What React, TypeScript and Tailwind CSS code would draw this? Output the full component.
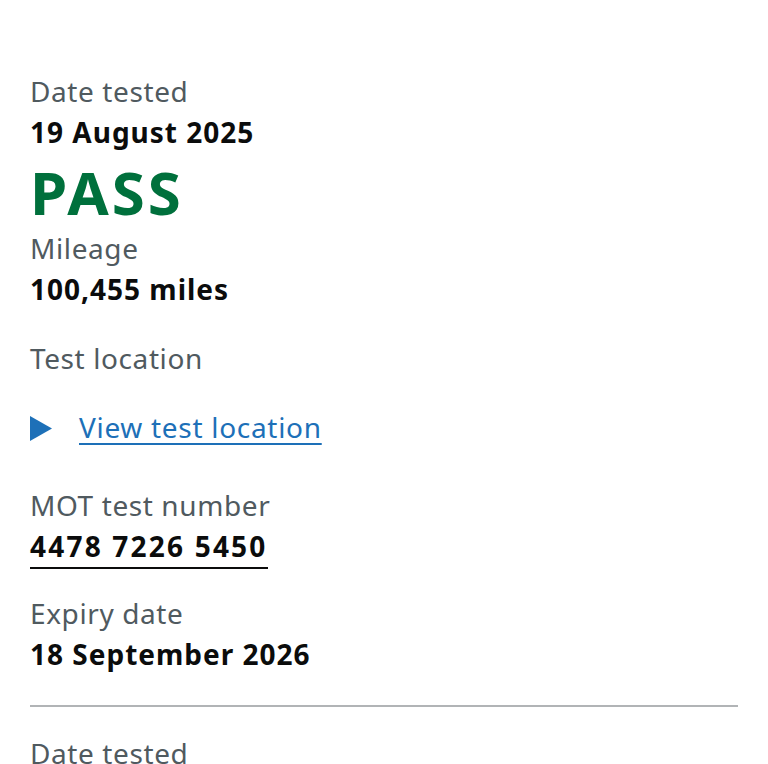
const font = { fontFamily: '"Noto Sans", "Open Sans", Arial, sans-serif' };

interface Row {
    label: string;
    value: string;
}

const Label = ({ children }: { children: React.ReactNode }) => (
    <p className="text-[28px] leading-[41px] tracking-[0.6px] text-[#505a5f]">{children}</p>
);

const Value = ({ children }: { children: React.ReactNode }) => (
    <p className="text-[28px] leading-[41px] tracking-[1px] font-bold text-[#0b0c0c]">{children}</p>
);

export default function App() {
    const first: Row = { label: "Date tested", value: "19 August 2025" };

    return (
        <div className="min-h-screen bg-white" style={font}>
            <div className="px-[30px] pt-[71px]">
                {/* Result card */}
                <div className="flex flex-col">
                    <Label>{first.label}</Label>
                    <Value>{first.value}</Value>
                    <p className="pt-[3px] text-[60px] leading-[72px] tracking-[3px] font-bold text-[#00703c]">PASS</p>
                    <Label>Mileage</Label>
                    <Value>100,455 miles</Value>
                </div>

                <div className="mt-[28px]">
                    <Label>Test location</Label>
                </div>

                <div className="mt-[28px] flex items-center gap-[27px]">
                    <svg width="22" height="25" viewBox="0 0 22 25" className="shrink-0 mt-[1px]">
                        <polygon points="0,0 22,12.5 0,25" fill="#1d70b8" />
                    </svg>
                    <a
                        href="#"
                        className="text-[28px] leading-[41px] tracking-[0.7px] text-[#1d70b8] underline decoration-[2px] underline-offset-[5px]"
                    >
                        View test location
                    </a>
                </div>

                <div className="mt-[37px]">
                    <Label>MOT test number</Label>
                    <span className="inline-block border-b-2 border-[#0b0c0c] text-[28px] leading-[41px] tracking-[2.2px] font-bold text-[#0b0c0c]">
                        4478 7226 5450
                    </span>
                </div>

                <div className="mt-[24px]">
                    <Label>Expiry date</Label>
                    <Value>18 September 2026</Value>
                </div>

                <hr className="mt-[30px] border-0 border-t-2 border-[#b1b4b6]" />

                <div className="mt-[26px]">
                    <Label>Date tested</Label>
                </div>
            </div>
        </div>
    );
}
